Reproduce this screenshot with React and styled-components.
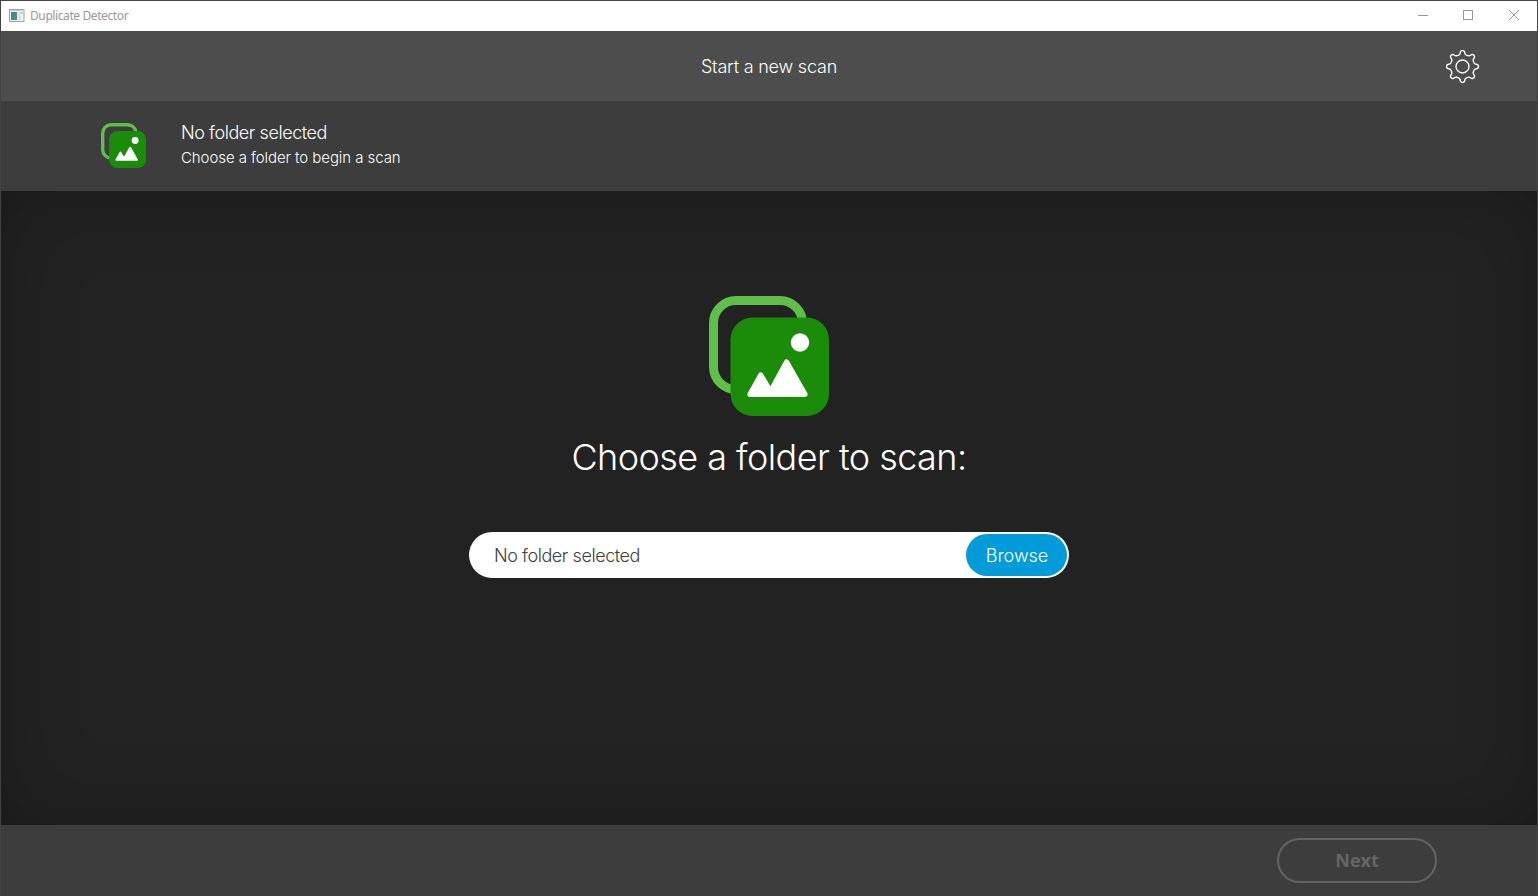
import React from 'react';
import styled, { createGlobalStyle } from 'styled-components';

const GlobalStyle = createGlobalStyle`
  * { box-sizing: border-box; }
  body { margin: 0; background: #222; overflow: hidden; }
`;

const Window = styled.div`
  width: 100vw;
  height: 100vh;
  display: flex;
  flex-direction: column;
  border: 1px solid #434343;
  border-bottom-width: 0;
  background: #222;
  color: #fff;
  font-family: Inter, 'Liberation Sans', sans-serif;
  font-weight: 300;
`;

const TitleBar = styled.div`
  flex: none;
  height: 30px;
  display: flex;
  align-items: center;
  padding: 0 17px 0 8px;
  background: #fff;
  color: #999;
`;

const WindowTitle = styled.span`
  flex: 1;
  margin-left: 5px;
  font: 400 12px/16px 'Noto Sans', sans-serif;
  letter-spacing: ${(p) => p.$spacing};
`;

const WindowControls = styled.div`
  display: flex;
  gap: 33px;
  align-items: center;
  padding-bottom: 2px;
  svg { display: block; }
`;

const Header = styled.header`
  flex: none;
  height: 70px;
  display: grid;
  grid-template-columns: 1fr auto 1fr;
  align-items: center;
  padding: 1px 57px 0;
  background: #4d4d4d;
`;

const SettingsButton = styled.button`
  grid-column: 3;
  justify-self: end;
  padding: 0;
  border: 0;
  background: none;
  svg { display: block; }
`;

const Label = styled.span`
  display: block;
  white-space: nowrap;
  font-size: ${(p) => p.$size}px;
  line-height: ${(p) => p.$line}px;
  letter-spacing: ${(p) => p.$spacing || 0}px;
`;

const HeaderTitle = styled(Label)`
  grid-column: 2;
  padding-top: 1px;
`;

const FolderBar = styled.section`
  flex: none;
  height: 90px;
  display: flex;
  align-items: center;
  gap: 35px;
  padding: 0 0 1px 100px;
  background: #3d3d3d;
`;

const FolderText = styled.div`
  padding-bottom: 2px;
`;

const Content = styled.main`
  flex: 1;
  display: flex;
  flex-direction: column;
  align-items: center;
  padding-top: 105px;
  background: #222;
  box-shadow: inset 0 0 80px rgba(0, 0, 0, 0.23);
`;

const Prompt = styled(Label).attrs({ as: 'h1' })`
  margin: 17px 0 51px;
  font-weight: 300;
`;

const PathField = styled.div`
  width: 600px;
  height: 46px;
  display: flex;
  align-items: center;
  justify-content: space-between;
  padding: 2px 2px 2px 25px;
  border-radius: 23px;
  background: #fff;
  color: #404040;
`;

const PathValue = styled(Label)`
  padding-top: 2px;
`;

const BrowseButton = styled.button`
  width: 101px;
  height: 42px;
  display: flex;
  align-items: center;
  justify-content: center;
  padding: 2px 0 0 1px;
  border: 0;
  border-radius: 21px;
  background: #009bd8;
  color: #fff;
  font-family: inherit;
  font-weight: 300;
`;

const Footer = styled.footer`
  flex: none;
  height: 71px;
  display: flex;
  justify-content: flex-end;
  padding: 13px 100px 0 0;
  background: #3d3d3d;
`;

const NextButton = styled.button`
  width: 160px;
  height: 45px;
  padding: 0 0 2px;
  border: 2px solid #636363;
  border-radius: 23px;
  background: transparent;
  color: #666;
  font: 700 18px/24px 'Open Sans', sans-serif;
`;

function PhotosIcon({ size }) {
  return (
    <svg width={size} height={size} viewBox="0 0 120 120">
      <rect x="4.5" y="4.5" width="89" height="89" rx="22.5" fill="none" stroke="#60bf4b" strokeWidth="9" />
      <rect x="21.5" y="21.5" width="98.5" height="98.5" rx="22" fill="#1a8c0a" />
      <circle cx="91" cy="46.5" r="9.2" fill="#fff" />
      <path
        d="M41 98.3 L51.8 79 L61.5 95.5 L77.6 66 L96 98.3 Z"
        fill="#fff"
        stroke="#fff"
        strokeWidth="5.2"
        strokeLinejoin="round"
      />
    </svg>
  );
}

const gearPoints = Array.from({ length: 192 }, (_, i) => {
  const angle = (i * Math.PI * 2) / 192;
  const radius = 14 + 2 * Math.cos(8 * angle);
  const bend = angle + 0.035 * Math.sin(16 * angle) - 0.035 * Math.sin(8 * angle);
  return `${(16.5 + radius * Math.cos(bend)).toFixed(2)},${(16.5 + radius * Math.sin(bend)).toFixed(2)}`;
}).join(' ');

function GearIcon() {
  return (
    <svg width="34" height="34" viewBox="0 0 34 34" fill="none" stroke="#fff" strokeWidth="1.4">
      <polygon points={gearPoints} strokeLinejoin="round" />
      <circle cx="16.5" cy="16.5" r="6.5" />
    </svg>
  );
}

function AppIcon() {
  return (
    <svg width="16" height="14" viewBox="0 0 16 14">
      <rect x="0.5" y="0.5" width="14.5" height="12" fill="#f1f4f5" stroke="#9ca6a9" />
      <path d="M1 1.5h13.5" stroke="#c3cccf" />
      <rect x="2" y="3" width="6" height="8" fill="#4e8b86" />
      <rect x="2" y="3" width="3" height="4" fill="#507c9b" />
      <rect x="9" y="3" width="3" height="8" fill="#dce2e4" />
      <path d="M13 3v2" stroke="#829fb0" />
    </svg>
  );
}

export default function App() {
  return (
    <Window>
      <GlobalStyle />
      <TitleBar>
        <AppIcon />
        <WindowTitle $spacing="-0.4px">Duplicate Detector</WindowTitle>
        <WindowControls>
          <svg width="12" height="12" stroke="#999"><path d="M2 6.5h10" /></svg>
          <svg width="14" height="12" fill="none" stroke="#999"><rect x="2.5" y="1.5" width="9" height="9" /></svg>
          <svg width="12" height="12" stroke="#999"><path d="M1 1l10 10M11 1L1 11" /></svg>
        </WindowControls>
      </TitleBar>
      <Header>
        <HeaderTitle $size={18} $line={24} $spacing={-0.2}>Start a new scan</HeaderTitle>
        <SettingsButton aria-label="Settings"><GearIcon /></SettingsButton>
      </Header>
      <FolderBar>
        <PhotosIcon size={45} />
        <FolderText>
          <Label $size={18} $line={26} $spacing={-0.43}>No folder selected</Label>
          <Label $size={15} $line={24} $spacing={-0.07}>Choose a folder to begin a scan</Label>
        </FolderText>
      </FolderBar>
      <Content>
        <PhotosIcon size={120} />
        <Prompt $size={36} $line={48} $spacing={-0.56}>Choose a folder to scan:</Prompt>
        <PathField>
          <PathValue $size={18} $line={24} $spacing={-0.43}>No folder selected</PathValue>
          <BrowseButton><Label $size={18} $line={24}>Browse</Label></BrowseButton>
        </PathField>
      </Content>
      <Footer>
        <NextButton>Next</NextButton>
      </Footer>
    </Window>
  );
}
